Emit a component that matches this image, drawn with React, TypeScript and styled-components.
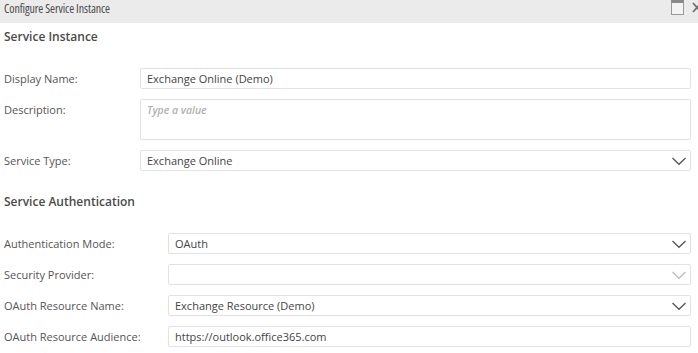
import React from "react";
import styled, { createGlobalStyle } from "styled-components";

const GlobalStyle = createGlobalStyle`
  html, body {
    margin: 0;
    padding: 0;
    background: #ffffff;
  }
  body {
    font-family: "Open Sans", "Liberation Sans", sans-serif;
    overflow: hidden;
  }
`;

const colors = {
  titleBg: "#ebebeb",
  title: "#4a4a4a",
  heading: "#4a4a4a",
  label: "#555555",
  value: "#444444",
  border: "#e2e2e2",
  placeholder: "#b0b0b0",
  chevron: "#555555",
  chevronDisabled: "#bdbdbd"
};

const Window = styled.div`
  width: 698px;
  height: 353px;
  display: flex;
  flex-direction: column;
  overflow: hidden;
`;

const TitleBar = styled.div`
  height: 23px;
  flex: none;
  display: flex;
  align-items: flex-start;
  justify-content: space-between;
  background: ${colors.titleBg};
  padding-left: 4px;
`;

const TitleText = styled.div`
  font-size: 12px;
  font-stretch: 77%;
  font-weight: 500;
  line-height: 18px;
  letter-spacing: -0.1px;
  color: ${colors.title};
`;

const TitleActions = styled.div`
  display: flex;
  align-items: flex-start;
  gap: 8px;
  margin-right: -5px;
`;

const MaxIcon = styled.div`
  width: 11px;
  height: 11px;
  border: 1px solid #9a9a9a;
  border-top: 3px solid #8a8a8a;
  background: #f4f4f4;
`;

const Body = styled.div`
  padding: 0 7px 0 4px;
  display: flex;
  flex-direction: column;
`;

const Heading = styled.div<{ $top: number; $bottom: number }>`
  font-size: 12px;
  font-weight: 600;
  line-height: 18px;
  color: ${colors.heading};
  margin: ${(p) => p.$top}px 0 ${(p) => p.$bottom}px;
`;

const Rows = styled.div`
  display: flex;
  flex-direction: column;
  gap: 10px;
`;

const Row = styled.div<{ $labelWidth: number }>`
  display: grid;
  grid-template-columns: ${(p) => p.$labelWidth}px 1fr;
  align-items: start;
`;

const Label = styled.div`
  font-size: 11px;
  line-height: 21px;
  color: ${colors.label};
  white-space: nowrap;
`;

const Field = styled.div<{ $tall?: boolean }>`
  height: ${(p) => (p.$tall ? 41 : 21)}px;
  box-sizing: border-box;
  border: 1px solid ${colors.border};
  border-radius: 2px;
  background: #fff;
  display: flex;
  align-items: ${(p) => (p.$tall ? "flex-start" : "center")};
  justify-content: space-between;
  padding: 0 3px 0 6px;
`;

const Value = styled.span`
  font-size: 11px;
  line-height: 19px;
  color: ${colors.value};
`;

const Placeholder = styled.span`
  font-size: 10.5px;
  font-style: italic;
  font-weight: 600;
  line-height: 19px;
  color: ${colors.placeholder};
  margin-top: 1px;
`;

const Chevron = ({ disabled }: { disabled?: boolean }) => (
  <svg width="16" height="10" viewBox="0 0 16 10">
    <polyline
      points="1.5,2 8,8.3 14.5,2"
      fill="none"
      stroke={disabled ? colors.chevronDisabled : colors.chevron}
      strokeWidth="1.3"
    />
  </svg>
);

const CloseIcon = () => (
  <svg width="11" height="15" viewBox="0 0 11 15">
    <path d="M1 3 L9 12 M9 3 L1 12" stroke="#6f6f6f" strokeWidth="1.7" fill="none" />
  </svg>
);

type FieldRow = {
  label: string;
  value?: string;
  placeholder?: string;
  select?: boolean;
  disabled?: boolean;
  tall?: boolean;
};

const instanceRows: FieldRow[] = [
  { label: "Display Name:", value: "Exchange Online (Demo)" },
  { label: "Description:", placeholder: "Type a value", tall: true },
  { label: "Service Type:", value: "Exchange Online", select: true }
];

const authRows: FieldRow[] = [
  { label: "Authentication Mode:", value: "OAuth", select: true },
  { label: "Security Provider:", select: true, disabled: true },
  { label: "OAuth Resource Name:", value: "Exchange Resource (Demo)", select: true },
  { label: "OAuth Resource Audience:", value: "https://outlook.office365.com" }
];

const FormRows = ({ rows, labelWidth }: { rows: FieldRow[]; labelWidth: number }) => (
  <Rows>
    {rows.map((r) => (
      <Row key={r.label} $labelWidth={labelWidth}>
        <Label>{r.label}</Label>
        <Field $tall={r.tall}>
          {r.placeholder ? (
            <Placeholder>{r.placeholder}</Placeholder>
          ) : (
            <Value>{r.value ?? ""}</Value>
          )}
          {r.select && <Chevron disabled={r.disabled} />}
        </Field>
      </Row>
    ))}
  </Rows>
);

const App = () => {
  return (
    <>
      <GlobalStyle />
      <Window>
        <TitleBar>
          <TitleText>Configure Service Instance</TitleText>
          <TitleActions>
            <MaxIcon />
            <CloseIcon />
          </TitleActions>
        </TitleBar>
        <Body>
          <Heading $top={5} $bottom={22}>
            Service Instance
          </Heading>
          <FormRows rows={instanceRows} labelWidth={136} />
          <Heading $top={22} $bottom={22}>
            Service Authentication
          </Heading>
          <FormRows rows={authRows} labelWidth={164} />
        </Body>
      </Window>
    </>
  );
};

export default App;
